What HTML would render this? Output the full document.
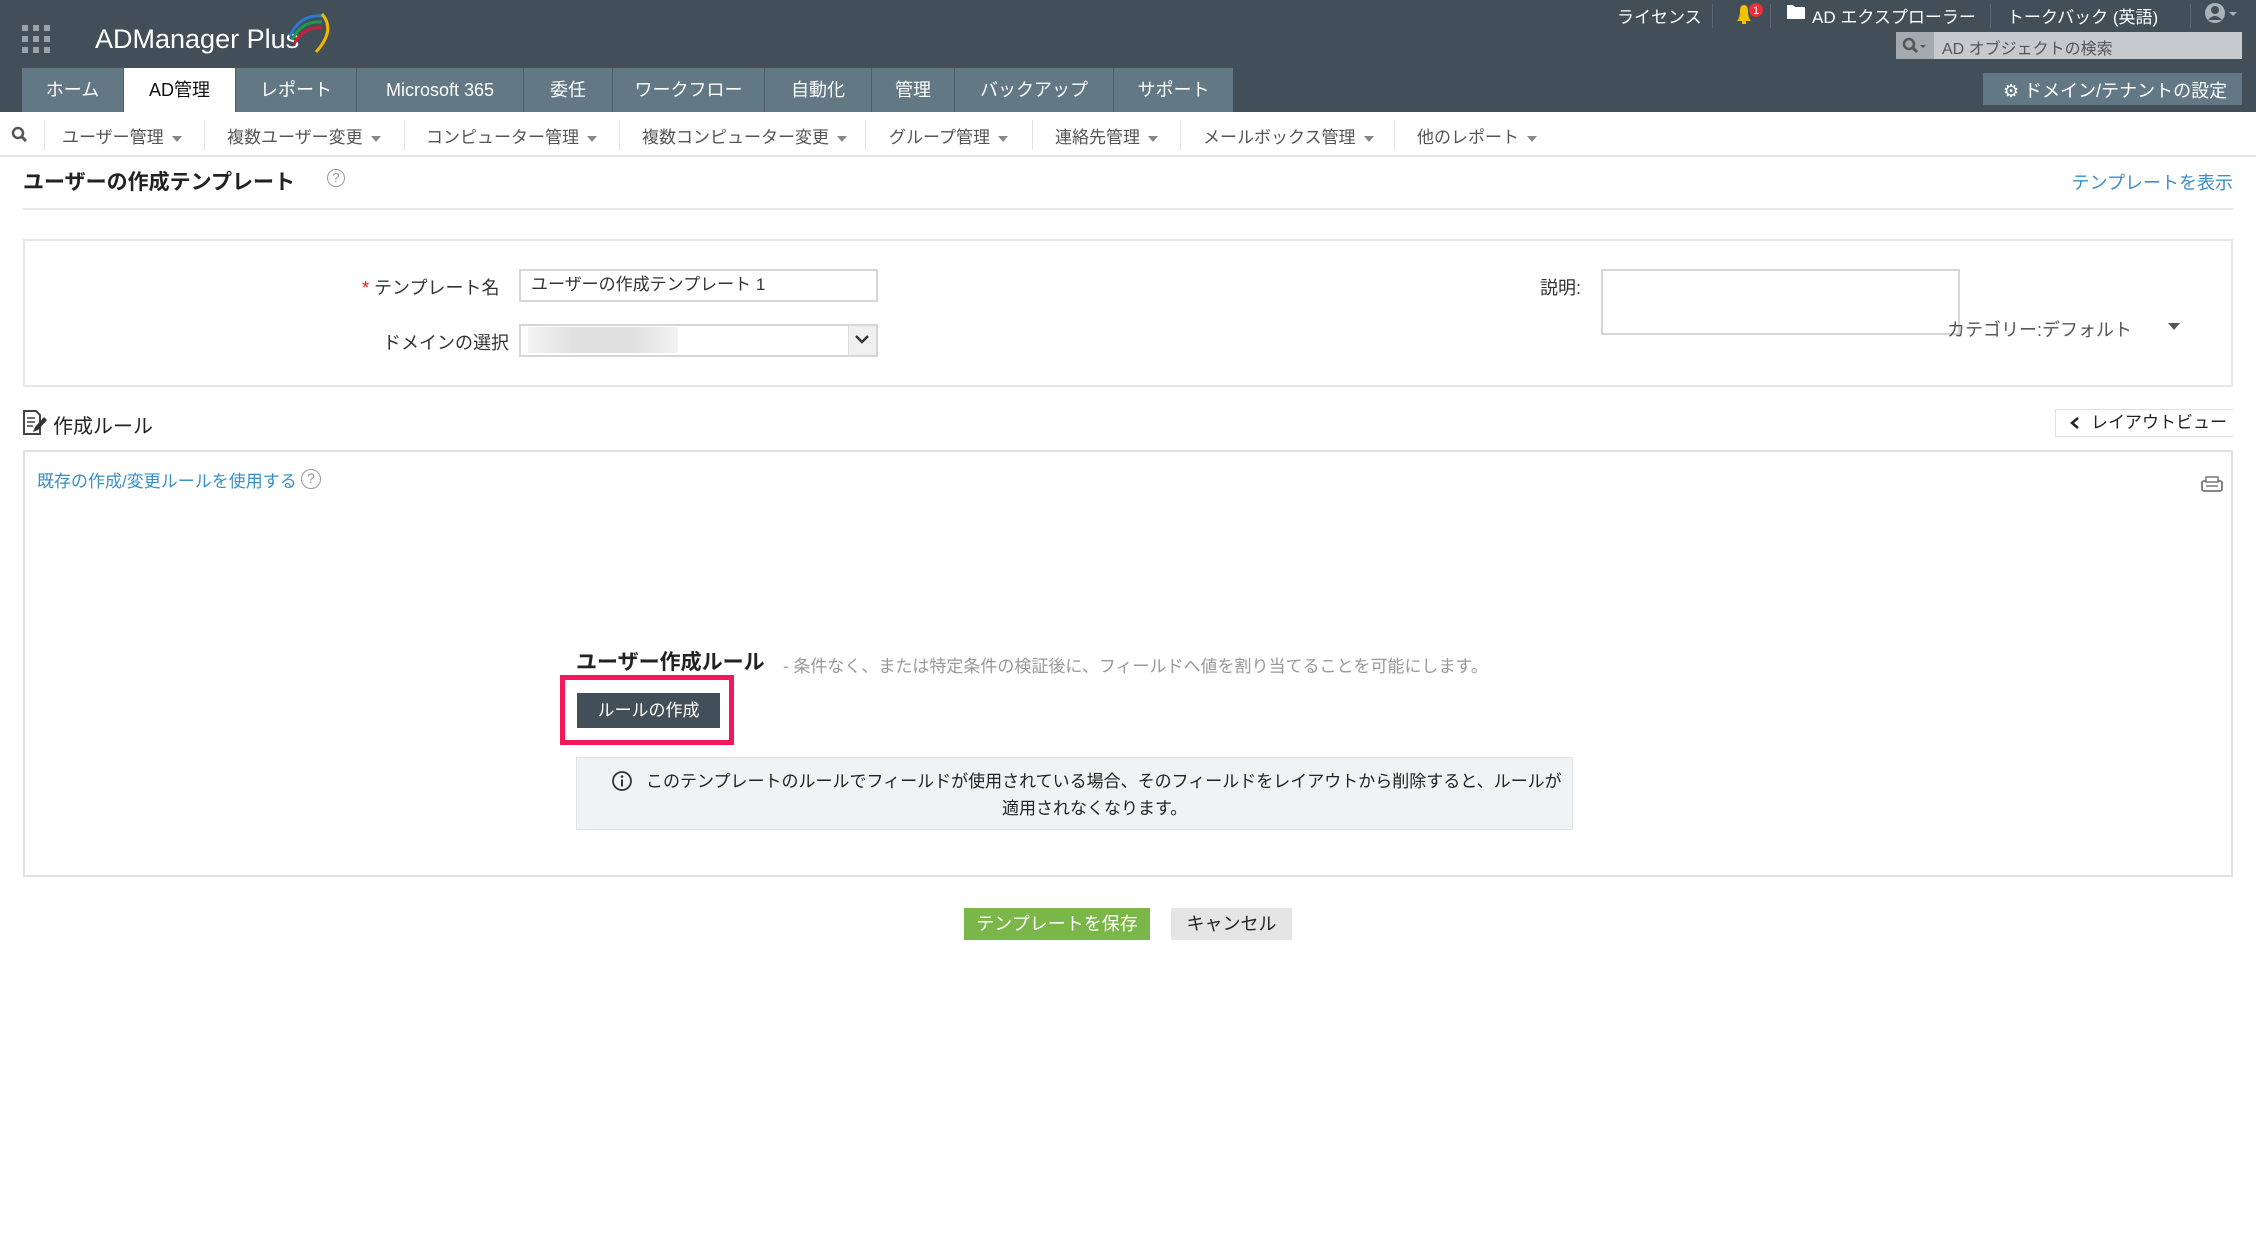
<!DOCTYPE html>
<html><head><meta charset="utf-8"><style>
*{box-sizing:border-box;margin:0;padding:0}
body{width:2256px;height:1251px;background:#fff;font-family:"Liberation Sans","Noto Sans CJK JP",sans-serif;color:#333;position:relative;overflow:hidden}
.a{position:absolute;white-space:nowrap}
#hdr{position:absolute;left:0;top:0;width:2256px;height:112px;background:#424f58}
.tab{position:absolute;top:68px;height:44px;background:#627885;color:#fff;font-size:18px;line-height:44px;text-align:center;border-right:1px solid #4e5f6a}
.tab.on{background:#fff;color:#111}
.sub{position:absolute;top:112px;left:0;width:2256px;height:45px;border-bottom:2px solid #e6e6e6}
.si{position:absolute;top:123px;font-size:17px;color:#555}
.si:after{content:"";display:inline-block;margin-left:8px;border-left:5px solid transparent;border-right:5px solid transparent;border-top:6px solid #888;vertical-align:middle}
.sep{position:absolute;top:120px;width:1px;height:30px;background:#e3e3e3}
.w{color:#fff;font-size:17px}
</style></head><body>
<div id="hdr"></div>
<svg class="a" style="left:22px;top:25px" width="30" height="30"><g fill="#9aa3aa"><rect x="0" y="0" width="6" height="6"/><rect x="11" y="0" width="6" height="6"/><rect x="22" y="0" width="6" height="6"/><rect x="0" y="11" width="6" height="6"/><rect x="11" y="11" width="6" height="6"/><rect x="22" y="11" width="6" height="6"/><rect x="0" y="22" width="6" height="6"/><rect x="11" y="22" width="6" height="6"/><rect x="0" y="22" width="6" height="6"/><rect x="22" y="22" width="6" height="6"/></g></svg>
<div class="a" style="left:95px;top:24px;color:#fff;font-size:27px">ADManager Plus</div>
<svg class="a" style="left:286px;top:6px" width="50" height="48"><path d="M4 30 Q14 8 36 10" stroke="#2a7bd0" stroke-width="3" fill="none"/><path d="M6 34 Q16 14 36 16" stroke="#1f9a4a" stroke-width="3" fill="none"/><path d="M8 38 Q18 20 36 22" stroke="#c8203a" stroke-width="3" fill="none"/><path d="M36 8 Q50 24 30 46" stroke="#f2b800" stroke-width="3" fill="none"/></svg>
<div class="tab" style="left:22px;width:102px">ホーム</div>
<div class="tab on" style="left:124px;width:112px">AD管理</div>
<div class="tab" style="left:236px;width:121px">レポート</div>
<div class="tab" style="left:357px;width:167px">Microsoft 365</div>
<div class="tab" style="left:524px;width:89px">委任</div>
<div class="tab" style="left:613px;width:152px">ワークフロー</div>
<div class="tab" style="left:765px;width:107px">自動化</div>
<div class="tab" style="left:872px;width:83px">管理</div>
<div class="tab" style="left:955px;width:159px">バックアップ</div>
<div class="tab" style="left:1114px;width:119px;border:none">サポート</div>
<div class="a w" style="left:1617px;top:3px">ライセンス</div>
<div class="a" style="left:1712px;top:4px;width:1px;height:24px;background:#5a6770"></div>
<svg class="a" style="left:1732px;top:2px" width="34" height="26"><path d="M5 19 Q8 16 8 9 Q8 3 12 3 Q16 3 16 9 Q16 16 19 19Z" fill="#f2c200"/><rect x="10" y="19" width="4" height="3" fill="#f2c200"/><circle cx="24" cy="8" r="7" fill="#e8303a"/><text x="24" y="12" font-size="11" fill="#fff" text-anchor="middle" font-family="Liberation Sans">1</text></svg>
<div class="a" style="left:1770px;top:4px;width:1px;height:24px;background:#5a6770"></div>
<svg class="a" style="left:1787px;top:5px" width="18" height="14"><path d="M0 0h6l2 2h10v12H0z" fill="#fff"/></svg>
<div class="a w" style="left:1812px;top:3px">AD エクスプローラー</div>
<div class="a" style="left:1990px;top:4px;width:1px;height:24px;background:#5a6770"></div>
<div class="a w" style="left:2007px;top:3px">トークバック (英語)</div>
<div class="a" style="left:2190px;top:4px;width:1px;height:24px;background:#5a6770"></div>
<svg class="a" style="left:2204px;top:2px" width="48" height="24"><circle cx="11" cy="11" r="10" fill="#aab2b8"/><circle cx="11" cy="8" r="4" fill="#424f58"/><path d="M4 18 Q11 10 18 18" fill="#424f58"/><path d="M25 10l4 4 4-4z" fill="#aab2b8"/></svg>
<div class="a" style="left:1896px;top:32px;width:346px;height:27px;background:#c6cacd"></div>
<div class="a" style="left:1896px;top:32px;width:38px;height:27px;background:#a3aaaf"></div>
<svg class="a" style="left:1902px;top:37px" width="26" height="18"><circle cx="7" cy="7" r="5" stroke="#555" stroke-width="2.5" fill="none"/><path d="M10 10l5 5" stroke="#555" stroke-width="3"/><path d="M18 8l3 3 3-3z" fill="#555"/></svg>
<div class="a" style="left:1942px;top:35px;font-size:16px;color:#555">AD オブジェクトの検索</div>
<div class="a" style="left:1983px;top:73px;width:259px;height:32px;background:#627885"></div>
<div class="a" style="left:2003px;top:77px;color:#fff;font-size:18px">⚙ ドメイン/テナントの設定</div>

<div class="sub"></div>
<svg class="a" style="left:11px;top:126px" width="18" height="18"><circle cx="7" cy="7" r="5" stroke="#555" stroke-width="2.5" fill="none"/><path d="M10 10l5 5" stroke="#555" stroke-width="3"/></svg>
<div class="sep" style="left:44px"></div>
<div class="si" style="left:62px">ユーザー管理</div><div class="sep" style="left:204px"></div>
<div class="si" style="left:227px">複数ユーザー変更</div><div class="sep" style="left:404px"></div>
<div class="si" style="left:426px">コンピューター管理</div><div class="sep" style="left:619px"></div>
<div class="si" style="left:642px">複数コンピューター変更</div><div class="sep" style="left:865px"></div>
<div class="si" style="left:889px">グループ管理</div><div class="sep" style="left:1032px"></div>
<div class="si" style="left:1055px">連絡先管理</div><div class="sep" style="left:1180px"></div>
<div class="si" style="left:1203px">メールボックス管理</div><div class="sep" style="left:1394px"></div>
<div class="si" style="left:1417px">他のレポート</div>

<div class="a" style="left:23px;top:166px;font-size:21px;font-weight:bold;color:#222">ユーザーの作成テンプレート</div>
<div class="a" style="left:327px;top:169px;width:18px;height:18px;border:1.5px solid #999;border-radius:50%;font-size:13px;line-height:15px;text-align:center;color:#999">?</div>
<div class="a" style="right:23px;top:169px;font-size:18px;color:#3a8fc7">テンプレートを表示</div>
<div class="a" style="left:23px;top:208px;width:2210px;height:2px;background:#e8e8e8"></div>

<div class="a" style="left:23px;top:239px;width:2210px;height:148px;border:2px solid #e6e6e6"></div>
<div class="a" style="left:362px;top:274px;font-size:18px;color:#333"><span style="color:#e02020">*</span> テンプレート名</div>
<div class="a" style="left:519px;top:269px;width:359px;height:33px;border:2px solid #d6d6d6;font-size:17px;line-height:28px;padding-left:10px;color:#333">ユーザーの作成テンプレート 1</div>
<div class="a" style="left:383px;top:329px;font-size:18px;color:#333">ドメインの選択</div>
<div class="a" style="left:519px;top:324px;width:359px;height:33px;border:2px solid #d6d6d6"></div>
<div class="a" style="left:528px;top:327px;width:150px;height:26px;background:linear-gradient(90deg,#f3f3f3,#e0e0e0 30%,#e0e0e0 70%,#f3f3f3)"></div>
<div class="a" style="left:848px;top:326px;width:28px;height:29px;background:#f0f0f0;border-left:1px solid #ddd"></div>
<svg class="a" style="left:854px;top:334px" width="16" height="12"><path d="M2 2l6 6 6-6" stroke="#333" stroke-width="2.5" fill="none"/></svg>
<div class="a" style="left:1540px;top:274px;font-size:18px;color:#333">説明:</div>
<div class="a" style="left:1601px;top:269px;width:359px;height:66px;border:2px solid #d6d6d6"></div>
<div class="a" style="left:1947px;top:316px;font-size:18px;color:#555">カテゴリー:デフォルト</div>
<svg class="a" style="left:2168px;top:323px" width="12" height="8"><path d="M0 0h12L6 7z" fill="#555"/></svg>

<svg class="a" style="left:23px;top:410px" width="24" height="26"><path d="M1 1h12l4 4v19H1z" stroke="#444" stroke-width="2" fill="#fff"/><path d="M4 8h8M4 12h8M4 16h6" stroke="#444" stroke-width="1.5"/><path d="M10 22l2-5 9-10 3 3-9 10z" fill="#333"/></svg>
<div class="a" style="left:53px;top:410px;font-size:20px;color:#222">作成ルール</div>
<div class="a" style="left:2055px;top:409px;width:178px;height:28px;border:1px solid #e0e0e0;border-right:none;font-size:17px;line-height:26px;padding-left:35px;color:#222">レイアウトビュー</div>
<svg class="a" style="left:2069px;top:416px" width="12" height="14"><path d="M9 2L3 7l6 5" stroke="#222" stroke-width="2.5" fill="none"/></svg>

<div class="a" style="left:23px;top:450px;width:2210px;height:427px;border:2px solid #e0e0e0"></div>
<div class="a" style="left:37px;top:467px;font-size:17px;color:#3a8fc7">既存の作成/変更ルールを使用する</div>
<div class="a" style="left:301px;top:469px;width:20px;height:20px;border:1.5px solid #999;border-radius:50%;font-size:14px;line-height:17px;text-align:center;color:#999">?</div>
<svg class="a" style="left:2201px;top:476px" width="22" height="18"><rect x="1" y="5" width="20" height="10" rx="2" stroke="#777" stroke-width="1.8" fill="#fff"/><rect x="5" y="1" width="12" height="5" stroke="#777" stroke-width="1.5" fill="#fff"/><path d="M5 10h12" stroke="#777" stroke-width="1.5"/></svg>

<div class="a" style="left:576px;top:646px;font-size:21px;font-weight:bold;color:#222">ユーザー作成ルール</div>
<div class="a" style="left:783px;top:652px;font-size:17px;color:#999">- 条件なく、または特定条件の検証後に、フィールドへ値を割り当てることを可能にします。</div>
<div class="a" style="left:560px;top:675px;width:174px;height:70px;border:5px solid #f5175a"></div>
<div class="a" style="left:577px;top:693px;width:143px;height:35px;background:#424f58;color:#fff;font-size:17px;line-height:35px;text-align:center">ルールの作成</div>
<div class="a" style="left:576px;top:757px;width:997px;height:73px;background:#f0f3f3;border:1px solid #dfe3e3"></div>
<svg class="a" style="left:611px;top:770px" width="22" height="22"><circle cx="11" cy="11" r="9" stroke="#333" stroke-width="1.8" fill="none"/><circle cx="11" cy="6.5" r="1.3" fill="#333"/><path d="M11 9.5v7" stroke="#333" stroke-width="2"/></svg>
<div class="a" style="left:646px;top:767px;font-size:17px;color:#222">このテンプレートのルールでフィールドが使用されている場合、そのフィールドをレイアウトから削除すると、ルールが</div>
<div class="a" style="left:1002px;top:794px;font-size:17px;color:#222">適用されなくなります。</div>

<div class="a" style="left:964px;top:908px;width:186px;height:32px;background:#7ab648;color:#fff;font-size:18px;line-height:32px;text-align:center">テンプレートを保存</div>
<div class="a" style="left:1171px;top:908px;width:121px;height:32px;background:#e5e5e5;color:#222;font-size:18px;line-height:32px;text-align:center">キャンセル</div>
</body></html>
